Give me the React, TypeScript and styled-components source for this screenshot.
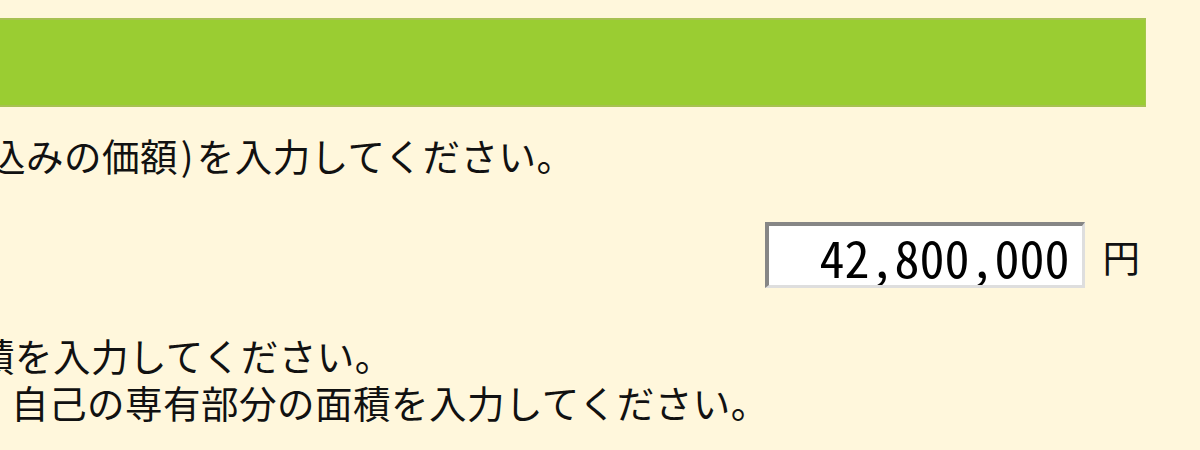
import React from 'react'
import styled, { createGlobalStyle } from 'styled-components'

const GlobalStyle = createGlobalStyle`
  html, body {
    margin: 0;
    padding: 0;
    background: #fff7dc;
  }

  body {
    overflow: hidden;
  }
`

export default function App () {
  return (
    <>
      <GlobalStyle />
      <Page>
        <TitleBar />
        <Note $indent={-12} $top={24}>
          込みの価額<Paren>)</Paren>を入力してください。
        </Note>
        <PriceRow>
          <AmountInput type='text' value='42,800,000' readOnly />
          <Unit>円</Unit>
        </PriceRow>
        <Note $indent={-23} $top={43}>
          積を入力してください。
        </Note>
        <Note $indent={11}>
          自己の専有部分の面積を入力してください。
        </Note>
      </Page>
    </>
  )
}

const Page = styled.div`
  width: 1200px;
  height: 450px;
  overflow: hidden;
  padding-top: 18px;
  box-sizing: border-box;
  font-family: "Noto Sans CJK JP", "Noto Sans", sans-serif;
  color: #111;
`

const TitleBar = styled.div`
  width: 1146px;
  height: 89px;
  box-sizing: border-box;
  background-color: #9acd32;
  border-top: 2px solid #a7c152;
  border-bottom: 2px solid #a7c152;
  border-right: 1px solid #a3c84a;
`

const Note = styled.div<{ $indent: number, $top?: number }>`
  margin-left: ${p => p.$indent}px;
  margin-top: ${p => p.$top ?? 0}px;
  font-size: 37.5px;
  line-height: 47px;
  letter-spacing: 0.5px;
  white-space: nowrap;
`

const Paren = styled.span`
  display: inline-block;
  width: 0.5em;
  text-align: center;
`

const PriceRow = styled.div`
  display: flex;
  justify-content: flex-end;
  align-items: center;
  gap: 18px;
  margin-top: 44px;
  padding-right: 60px;
`

const AmountInput = styled.input`
  width: 320px;
  height: 66px;
  box-sizing: border-box;
  margin: 0;
  padding: 0 12px 0 0;
  text-align: right;
  background: #fff;
  color: #000;
  outline: none;
  border-style: solid;
  border-width: 4px 3px 3px 4px;
  border-color: #868686 #dedede #dedede #868686;
  font-family: "Noto Sans Mono CJK JP", "Noto Sans CJK JP", monospace;
  font-feature-settings: "hwid";
  font-size: 50px;
`

const Unit = styled.span`
  font-size: 37.5px;
  line-height: 47px;
`
